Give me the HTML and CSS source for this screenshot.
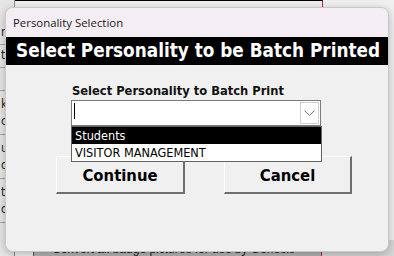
FILE: index.html
```html
<!DOCTYPE html>
<html lang="en">
<head>
<meta charset="UTF-8">
<title>Personality Selection</title>
<link rel="stylesheet" href="styles.css">
</head>
<body>

<div class="app">
  <div class="side">
    <div class="side-row">ri</div>
    <div class="side-row">th</div>
    <div class="side-row"></div>
    <div class="side-row tall">k<br>c</div>
    <div class="side-row tall">ur<br>o</div>
    <div class="side-row tall">tu<br>on</div>
  </div>
  <div class="main">
    <div class="main-top"></div>
    <div class="main-fill"></div>
    <div class="main-bottom">
      <div class="status-text">Convert all badge pictures for use by Genesis</div>
      <div class="status-end"></div>
    </div>
  </div>
</div>

<div class="dialog">
  <div class="titlebar">Personality Selection</div>
  <div class="banner">Select Personality to be Batch Printed</div>
  <div class="dialog-body">
    <div class="field">
      <label class="field-label">Select Personality to Batch Print</label>
      <div class="combo">
        <div class="combo-input"><span class="caret"></span></div>
        <div class="combo-btn">
          <svg width="11" height="6" viewBox="0 0 11 6"><path d="M0.5 0.5 L5.5 5.5 L10.5 0.5" fill="none" stroke="#7a7a7a" stroke-width="1"/></svg>
        </div>
        <div class="combo-list">
          <div class="combo-item selected">Students</div>
          <div class="combo-item">VISITOR MANAGEMENT</div>
        </div>
      </div>
    </div>
    <div class="buttons">
      <div class="btn">Continue</div>
      <div class="btn">Cancel</div>
    </div>
  </div>
</div>

</body>
</html>
```

FILE: styles.css
```css
body {
  margin: 0;
  padding: 0;
  width: 394px;
  height: 256px;
  overflow: hidden;
  position: relative;
  background: #f0f0f0;
  font-family: 'DejaVu Sans Condensed', 'DejaVu Sans', sans-serif;
}
.app {
  display: flex;
  height: 256px;
}
.side {
  width: 14px;
  background: #e6e6e6;
  border-right: 1px solid #8c8c8c;
  padding-top: 22px;
  font-size: 12px;
  color: #222;
}
.side-row {
  height: 22px;
  border-bottom: 1px solid #a0a0a0;
  padding-left: 1px;
  line-height: 20px;
  overflow: hidden;
}
.side-row.tall {
  height: 44px;
  line-height: 17px;
  padding-top: 5px;
  box-sizing: border-box;
}
.main {
  flex: 1;
  display: flex;
  flex-direction: column;
}
.main-top {
  height: 8px;
  border-top: 1px solid #000;
  margin-right: 71px;
  border-right: 1px solid #c0203a;
}
.main-fill {
  flex: 1;
}
.main-bottom {
  height: 16px;
  display: flex;
  margin-left: 18px;
  border-left: 1px solid #555;
}
.status-text {
  width: 288px;
  background: #b4b4b4;
  border-right: 1px solid #c0203a;
  font-family: 'Liberation Sans', sans-serif;
  font-size: 12px;
  color: #222;
  padding-left: 18px;
  padding-top: 2px;
  box-sizing: border-box;
}
.status-end {
  flex: 1;
  background: #d6d6d6;
}
.dialog {
  position: absolute;
  left: 5px;
  top: 7px;
  width: 384px;
  height: 245px;
  background: #f0f0f0;
  border: 1px solid #c8c8c8;
  box-sizing: border-box;
  border-radius: 8px;
  box-shadow: 0 2px 8px rgba(0,0,0,0.25);
  overflow: hidden;
}
.titlebar {
  height: 29px;
  background: #f4eef4;
  font-family: 'Open Sans', 'Noto Sans', sans-serif;
  font-size: 11.4px;
  color: #1a1a1a;
  padding-left: 7px;
  line-height: 29px;
}
.banner {
  height: 28px;
  background: #000;
  color: #fff;
  font-family: 'DejaVu Sans Condensed', sans-serif;
  font-weight: bold;
  font-size: 18.8px;
  line-height: 28px;
  padding-left: 10px;
  white-space: nowrap;
}
.dialog-body {
  padding-top: 18px;
}
.field {
  margin-left: 65px;
  width: 250px;
}
.field-label {
  display: block;
  font-weight: bold;
  font-size: 12.8px;
  color: #111;
  padding-left: 1px;
  height: 17px;
  line-height: 15px;
}
.combo {
  position: relative;
  display: flex;
  height: 26px;
  border: 1px solid #7a7a7a;
  box-sizing: border-box;
  background: #fff;
}
.combo-input {
  flex: 1;
  padding: 2px 0 0 2px;
}
.caret {
  display: block;
  width: 1px;
  height: 16px;
  background: #000;
}
.combo-btn {
  width: 17px;
  margin: 1px 1px 1px 0;
  border: 1px solid #d0d0d0;
  display: flex;
  align-items: center;
  justify-content: center;
}
.combo-list {
  position: absolute;
  left: -1px;
  top: 25px;
  width: 249px;
  background: #fff;
  border: 1px solid #646464;
  z-index: 2;
}
.combo-item {
  height: 17px;
  line-height: 17px;
  font-size: 12.6px;
  padding-left: 3px;
  color: #000;
}
.combo-item.selected {
  background: #000;
  color: #fff;
}
.buttons {
  display: flex;
  gap: 39px;
  margin-top: 30px;
  margin-left: 50px;
}
.btn {
  width: 129px;
  height: 38px;
  box-sizing: border-box;
  border-top: 1px solid #fff;
  border-left: 1px solid #fff;
  border-right: 2px solid #6e6e6e;
  border-bottom: 2px solid #6e6e6e;
  padding-top: 2px;
  text-align: center;
  font-weight: bold;
  font-size: 16.5px;
  line-height: 34px;
  color: #000;
}
.btn + .btn {
  width: 128px;
}
```
